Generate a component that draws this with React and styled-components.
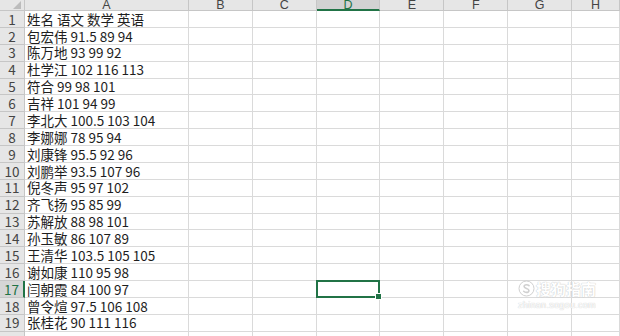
import React from 'react';
import styled, { createGlobalStyle, css } from 'styled-components';

const GlobalStyle = createGlobalStyle`
  html, body {
    margin: 0;
    padding: 0;
    background: #ffffff;
    overflow: hidden;
  }
  * {
    box-sizing: border-box;
  }
`;

const COL_W = 63.83;
const ROW_H = 16.88;

const rows = [
  '姓名 语文 数学 英语',
  '包宏伟 91.5 89 94',
  '陈万地 93 99 92',
  '杜学江 102 116 113',
  '符合 99 98 101',
  '吉祥 101 94 99',
  '李北大 100.5 103 104',
  '李娜娜 78 95 94',
  '刘康锋 95.5 92 96',
  '刘鹏举 93.5 107 96',
  '倪冬声 95 97 102',
  '齐飞扬 95 85 99',
  '苏解放 88 98 101',
  '孙玉敏 86 107 89',
  '王清华 103.5 105 105',
  '谢如康 110 95 98',
  '闫朝霞 84 100 97',
  '曾令煊 97.5 106 108',
  '张桂花 90 111 116',
  '',
];

const columns = ['A', 'B', 'C', 'D', 'E', 'F', 'G', 'H'];
const activeCol = 'D';
const activeRow = 17;

const Sheet = styled.div`
  position: relative;
  width: 620px;
  height: 336px;
  overflow: hidden;
  display: grid;
  grid-template-columns: 25px 164px repeat(6, ${COL_W}px) 1fr;
  grid-template-rows: 11px repeat(20, ${ROW_H}px);
  font-family: "Noto Sans CJK SC", "Noto Sans", sans-serif;
  color: #1e1e1e;
`;

const Corner = styled.div`
  position: relative;
  background: #e6e6e6;
  border-right: 1px solid #c6c6c6;
  border-bottom: 1px solid #c6c6c6;

  &::after {
    content: '';
    position: absolute;
    right: 3px;
    bottom: 1px;
    width: 0;
    height: 0;
    border-left: 8px solid transparent;
    border-bottom: 8px solid #bcbcbc;
  }
`;

const ColHead = styled.div`
  display: flex;
  justify-content: center;
  background: ${(p) => (p.$active ? '#d2d2d2' : '#e6e6e6')};
  border-right: 1px solid #c6c6c6;
  border-bottom: ${(p) => (p.$active ? '2px solid #217346' : '1px solid #c6c6c6')};
  font-family: "Liberation Sans", Arial, sans-serif;
  font-size: 12.5px;
  line-height: 10px;
  color: ${(p) => (p.$active ? '#217346' : '#444444')};
`;

const RowHead = styled.div`
  display: flex;
  align-items: center;
  justify-content: center;
  background: ${(p) => (p.$active ? '#d6d6d6' : '#e6e6e6')};
  border-bottom: 1px solid #c6c6c6;
  ${(p) =>
    p.$active
      ? css`
          border-right: 2px solid #217346;
          color: #217346;
        `
      : css`
          border-right: 1px solid #c6c6c6;
          color: #444444;
        `}
  font-size: 13.5px;
  line-height: 1;
  padding-top: 1px;
`;

const Cell = styled.div`
  position: relative;
  display: flex;
  align-items: center;
  padding-left: 2px;
  border-right: 1px solid #dadada;
  border-bottom: 1px solid #dadada;
  font-size: 13.5px;
  line-height: 1;
  white-space: nowrap;
  padding-top: 1px;
`;

const Selection = styled.div`
  position: absolute;
  left: -1px;
  top: -1px;
  right: -1px;
  bottom: -1px;
  border: 2px solid #217346;
  z-index: 2;

  &::after {
    content: '';
    position: absolute;
    right: -4px;
    bottom: -4px;
    width: 5px;
    height: 5px;
    background: #217346;
    border: 1px solid #ffffff;
  }
`;

const Watermark = styled.div`
  position: absolute;
  right: 24px;
  top: 280px;
  display: flex;
  flex-direction: column;
  align-items: center;
  gap: 4px;
  z-index: 3;
  pointer-events: none;
`;

const MarkTop = styled.div`
  display: flex;
  align-items: center;
  gap: 1px;
  color: #ffffff;
  font-size: 15px;
  font-weight: 700;
  line-height: 1;
  text-shadow: 0 0 1px #c8c8c8, 0 0 1px #c8c8c8;
`;

const MarkUrl = styled.div`
  color: #ffffff;
  font-family: "Liberation Sans", Arial, sans-serif;
  font-size: 9px;
  line-height: 1;
  letter-spacing: 0.3px;
  text-shadow: 0 0 1px #cfcfcf, 0 0 1px #cfcfcf;
`;

const SogouLogo = () => (
  <svg width="17" height="17" viewBox="0 0 17 17">
    <circle cx="8.5" cy="8.5" r="7.5" fill="#ffffff" stroke="#d0d0d0" strokeWidth="1" />
    <path
      d="M11 5.6c-.6-.6-1.5-.9-2.5-.9-1.4 0-2.4.8-2.4 1.9 0 2.3 4.8 1.4 4.8 3.8 0 1.2-1.1 2-2.5 2-1.1 0-2-.4-2.7-1.1"
      fill="none"
      stroke="#d0d0d0"
      strokeWidth="1.6"
      strokeLinecap="round"
    />
  </svg>
);

const App = () => (
  <>
    <GlobalStyle />
    <Sheet>
      <Corner />
      {columns.map((c) => (
        <ColHead key={c} $active={c === activeCol}>
          {c}
        </ColHead>
      ))}
      {rows.map((text, i) => {
        const r = i + 1;
        return (
          <React.Fragment key={r}>
            <RowHead $active={r === activeRow}>{r <= 19 ? r : ''}</RowHead>
            {columns.map((c) => (
              <Cell key={c}>
                {c === 'A' ? text : null}
                {c === activeCol && r === activeRow ? <Selection /> : null}
              </Cell>
            ))}
          </React.Fragment>
        );
      })}
      <Watermark>
        <MarkTop>
          <SogouLogo />
          <span>搜狗指南</span>
        </MarkTop>
        <MarkUrl>zhinan.sogou.com</MarkUrl>
      </Watermark>
    </Sheet>
  </>
);

export default App;
